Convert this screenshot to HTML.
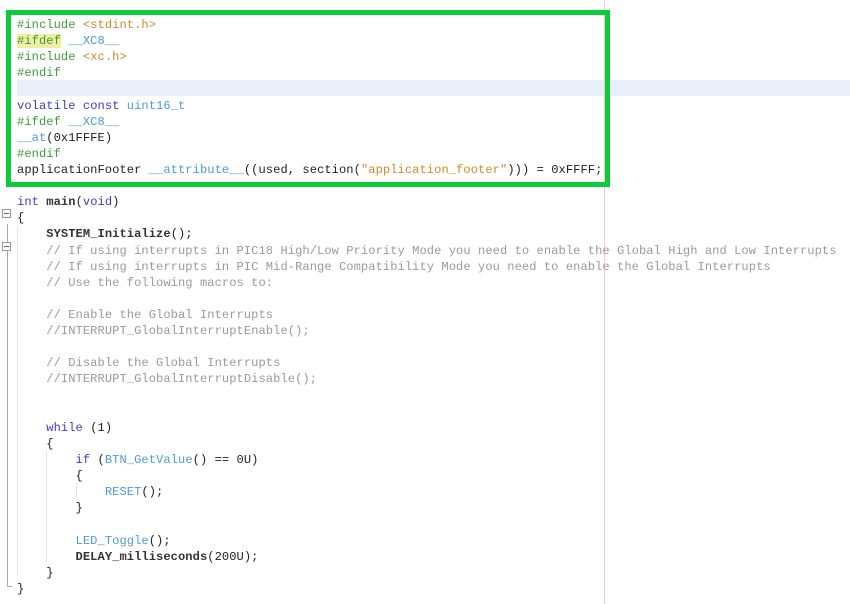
<!DOCTYPE html>
<html><head><meta charset="utf-8"><style>
html,body{margin:0;padding:0;background:#fff;width:850px;height:604px;overflow:hidden;position:relative}
pre{position:absolute;left:17px;top:17px;margin:0;font-family:"Liberation Mono",monospace;font-size:12.1px;line-height:16.11px;color:#222;letter-spacing:0.06px}
.p{color:#3d9a3d}.s{color:#d08a2c}.k{color:#3b3bc8}.i{color:#4d9bd8}.c{color:#9a9a9a}.b{font-weight:bold;color:#333}
.hl{background:#e8eefa;position:absolute;left:17px;top:80px;width:833px;height:16px}
.box{position:absolute;left:6px;top:10px;width:594px;height:167px;border:5px solid #0ccc3c}
.red{position:absolute;left:604px;top:0;width:1px;height:604px;background:#f8c8c8}
.fold{position:absolute;width:7px;height:7px;border:1px solid #999;background:#fff;font-size:0}
.fold:after{content:"";position:absolute;left:1px;top:3px;width:5px;height:1px;background:#666}
.v{position:absolute;width:1px;background:#aaa}
.g{position:absolute;width:1px;background:#e4e4e4}
</style></head><body>
<div class="hl"></div>
<div class="red"></div>
<div class="v" style="left:7px;top:224px;height:362px"></div>
<div class="v" style="left:7px;top:586px;width:5px;height:1px"></div>
<div class="v" style="left:10px;top:40px;height:20px;background:#ccc"></div>
<div class="v" style="left:10px;top:120px;height:30px;background:#ccc"></div>
<div class="fold" style="left:2px;top:209px"></div>
<div class="fold" style="left:2px;top:242px"></div>
<div class="g" style="left:17px;top:226px;height:350px"></div>
<div class="g" style="left:46px;top:451px;height:112px"></div>
<div class="g" style="left:76px;top:483px;height:17px"></div>
<pre><span class="p">#include</span> <span class="s">&lt;stdint.h&gt;</span>
<span class="p" style="background:#eef0a0">#ifdef</span> <span class="i">__XC8__</span>
<span class="p">#include</span> <span class="s">&lt;xc.h&gt;</span>
<span class="p">#endif</span>

<span class="k">volatile</span> <span class="k">const</span> <span class="i">uint16_t</span>
<span class="p">#ifdef</span> <span class="i">__XC8__</span>
<span class="i">__at</span>(0x1FFFE)
<span class="p">#endif</span>
applicationFooter <span class="i">__attribute__</span>((used, section(<span class="s">"application_footer"</span>))) = 0xFFFF;

<span class="k">int</span> <span class="b">main</span>(<span class="k">void</span>)
{
    <span class="b">SYSTEM_Initialize</span>();
    <span class="c">// If using interrupts in PIC18 High/Low Priority Mode you need to enable the Global High and Low Interrupts</span>
    <span class="c">// If using interrupts in PIC Mid-Range Compatibility Mode you need to enable the Global Interrupts</span>
    <span class="c">// Use the following macros to:</span>

    <span class="c">// Enable the Global Interrupts</span>
    <span class="c">//INTERRUPT_GlobalInterruptEnable();</span>

    <span class="c">// Disable the Global Interrupts</span>
    <span class="c">//INTERRUPT_GlobalInterruptDisable();</span>


    <span class="k">while</span> (1)
    {
        <span class="k">if</span> (<span class="i">BTN_GetValue</span>() == 0U)
        {
            <span class="i">RESET</span>();
        }

        <span class="i">LED_Toggle</span>();
        <span class="b">DELAY_milliseconds</span>(200U);
    }
}</pre>
<div class="box"></div>
</body></html>
